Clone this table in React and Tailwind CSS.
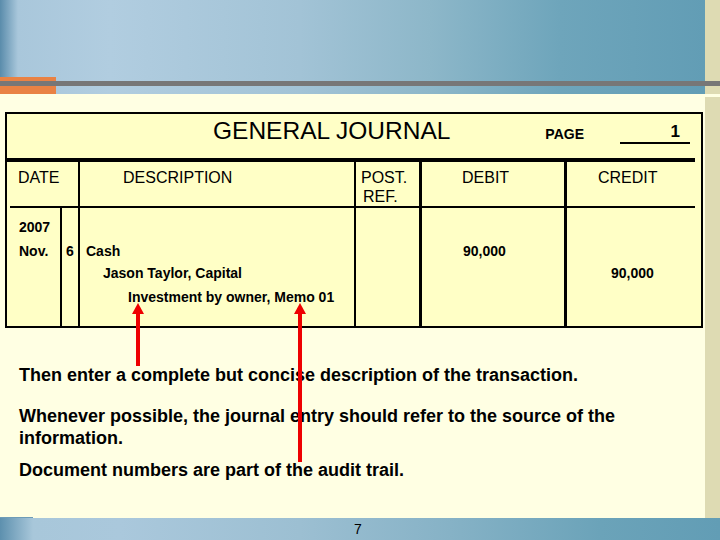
export default function App() {
  const font = { fontFamily: '"Liberation Sans", Arial, sans-serif' }
  return (
    <div className="relative w-[720px] h-[540px] overflow-hidden flex flex-col bg-[#ffffe3] text-black" style={font}>
      {/* top banner */}
      <div className="relative h-[94px] flex shrink-0">
        <div className="w-[705px] h-full bg-[linear-gradient(to_right,#5a8cab_0px,#a9c7db_18px,#b1cde0_110px,#a2c3d6_300px,#8db7c9_430px,#6ea5bb_560px,#629db5_705px)]" />
        <div className="flex-1 h-full bg-[#dedbb3]" />
        <div className="absolute left-0 top-[77px] w-[56px] h-[17px] bg-[#e98244]" />
        <div className="absolute left-0 right-0 top-[81px] h-[5px] bg-[#777777]" />
      </div>

      {/* middle */}
      <div className="flex-1 flex">
        <div className="w-[705px] flex flex-col">
          {/* journal box */}
          <div className="mt-[18px] ml-[5px] w-[698px] h-[216px] border-2 border-black bg-[#ffffc6] flex flex-col">
            <div className="h-[44px] flex items-start shrink-0">
              <div className="pl-[206px] pt-[3px] text-[24.5px] leading-[28px]">GENERAL JOURNAL</div>
              <div className="ml-[95px] mt-[12px] text-[14px] leading-[17px] font-bold">PAGE</div>
              <div className="ml-[36px] mt-[8px] w-[70px] h-[22px] border-b-2 border-black text-right pr-[10px] text-[17px] leading-[20px] font-bold">1</div>
            </div>
            <div className="h-[4px] bg-black mr-[6px] shrink-0" />
            <div className="flex-1 flex text-[16px]">
              {/* date */}
              <div className="w-[73px] border-r-2 border-black flex flex-col">
                <div className="ml-[3px] h-[46px] border-b-2 border-black pl-[8px] pt-[6px] leading-[19px]">DATE</div>
                <div className="flex-1 flex text-[14px] font-bold leading-[23px]">
                  <div className="w-[55px] border-r-2 border-black pl-[12px] pt-[8px]">
                    <div>2007</div>
                    <div className="mt-[1px]">Nov.</div>
                  </div>
                  <div className="flex-1 pl-[4px] pt-[32px]">6</div>
                </div>
              </div>
              {/* description */}
              <div className="w-[276px] border-r-2 border-black flex flex-col">
                <div className="h-[46px] border-b-2 border-black pl-[43px] pt-[6px] leading-[19px]">DESCRIPTION</div>
                <div className="flex-1 pt-[32px] text-[14px] font-bold leading-[23px]">
                  <div className="pl-[6px]">Cash</div>
                  <div className="pl-[23px] -mt-[1px]">Jason Taylor, Capital</div>
                  <div className="pl-[48px] mt-[1px]">Investment by owner, Memo 01</div>
                </div>
              </div>
              {/* post ref */}
              <div className="w-[66px] border-r-[3px] border-black flex flex-col">
                <div className="h-[46px] border-b-2 border-black pt-[6px] leading-[19px]">
                  <div className="pl-[5px]">POST.</div>
                  <div className="pl-[7px]">REF.</div>
                </div>
              </div>
              {/* debit */}
              <div className="w-[145px] border-r-[3px] border-black flex flex-col">
                <div className="h-[46px] border-b-2 border-black pl-[40px] pt-[6px] leading-[19px]">DEBIT</div>
                <div className="flex-1 pt-[32px] pl-[41px] text-[14px] font-bold leading-[23px]">90,000</div>
              </div>
              {/* credit */}
              <div className="flex-1 flex flex-col">
                <div className="mr-[6px] h-[46px] border-b-2 border-black pl-[31px] pt-[6px] leading-[19px]">CREDIT</div>
                <div className="flex-1 pt-[54px] pl-[44px] text-[14px] font-bold leading-[23px]">90,000</div>
              </div>
            </div>
          </div>

          {/* notes */}
          <div className="pl-[19px] text-[18px] font-bold leading-[22px]">
            <p className="mt-[36px]">Then enter a complete but concise description of the transaction.</p>
            <p className="mt-[19px]">Whenever possible, the journal entry should refer to the source of the information.</p>
            <p className="mt-[10px]">Document numbers are part of the audit trail.</p>
          </div>
        </div>
        <div className="flex-1 mt-[3px] bg-[#dedbb3]" />
      </div>

      {/* bottom bar */}
      <div className="relative h-[22px] shrink-0 bg-[linear-gradient(to_right,#5d90ae_0px,#a8c7da_33px,#aac8dc_120px,#9cbfd2_300px,#86b2c6_450px,#6ba3b9_600px,#629db5_720px)] flex items-center justify-center">
        <div className="absolute left-0 top-[-1px] w-[33px] h-[1px] bg-[#6e9cb7]" />
        <span className="text-[14px] leading-[16px] ml-[-4px]">7</span>
      </div>

      {/* arrows */}
      <svg className="absolute left-0 top-0 pointer-events-none" width="720" height="540">
        <polygon points="138,303 132,314 144,314" fill="#ee0000" />
        <rect x="136" y="312" width="4" height="54" fill="#ee0000" />
        <polygon points="300,303 294,314 306,314" fill="#ee0000" />
        <rect x="298" y="312" width="4" height="150" fill="#ee0000" />
      </svg>
    </div>
  )
}
